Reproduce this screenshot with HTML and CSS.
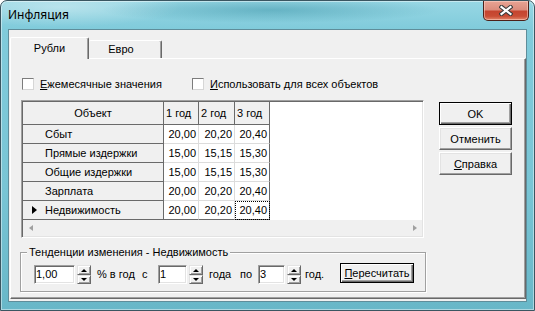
FILE: index.html
```html
<!DOCTYPE html>
<html lang="ru">
<head>
    <meta charset="UTF-8">
    <title>Инфляция</title>
    <link rel="stylesheet" href="styles.css">
</head>
<body>
    <div class="window">
        <div class="titlebar">
            <span class="title">Инфляция</span>
            <button class="close" type="button">
                <svg width="14" height="11" viewBox="0 0 14 11">
                    <path d="M2.5 2 L11.5 9 M11.5 2 L2.5 9" stroke="#3b3b3b" stroke-width="4.2" stroke-linecap="square"/>
                    <path d="M2.5 2 L11.5 9 M11.5 2 L2.5 9" stroke="#fff" stroke-width="2.2" stroke-linecap="square"/>
                </svg>
            </button>
        </div>
        <div class="client">
            <div class="tabs">
                <div class="tab-strip">
                    <div class="tab active">Рубли</div>
                    <div class="tab">Евро</div>
                </div>
                <div class="page">
                    <div class="main">
                        <div class="checks">
                            <label class="check wide"><span class="box"></span><span><u>Е</u>жемесячные значения</span></label>
                            <label class="check"><span class="box"></span><span><u>И</u>спользовать для всех объектов</span></label>
                        </div>
                        <div class="grid">
                            <div class="cells">
                                <div class="sheet">
                                    <div class="fixed head">Объект</div>
                                    <div class="fixed col">1 год</div>
                                    <div class="fixed col">2 год</div>
                                    <div class="fixed col">3 год</div>

                                    <div class="fixed name">Сбыт</div>
                                    <div class="num">20,00</div>
                                    <div class="num">20,20</div>
                                    <div class="num">20,40</div>

                                    <div class="fixed name">Прямые издержки</div>
                                    <div class="num">15,00</div>
                                    <div class="num">15,15</div>
                                    <div class="num">15,30</div>

                                    <div class="fixed name">Общие издержки</div>
                                    <div class="num">15,00</div>
                                    <div class="num">15,15</div>
                                    <div class="num">15,30</div>

                                    <div class="fixed name">Зарплата</div>
                                    <div class="num">20,00</div>
                                    <div class="num">20,20</div>
                                    <div class="num">20,40</div>

                                    <div class="fixed name current"><span class="marker"></span>Недвижимость</div>
                                    <div class="num">20,00</div>
                                    <div class="num">20,20</div>
                                    <div class="num focus">20,40</div>
                                </div>
                            </div>
                            <div class="hscroll"><span class="arr left"></span><span class="arr right"></span></div>
                        </div>
                        <div class="group">
                            <span class="caption">Тенденции изменения - Недвижимость</span>
                            <div class="trend">
                                <span class="edit e1">1,00</span>
                                <span class="spin"><span class="up"></span><span class="down"></span></span>
                                <span class="lbl pct">% в год</span>
                                <span class="lbl from">с</span>
                                <span class="edit e2">1</span>
                                <span class="spin"><span class="up"></span><span class="down"></span></span>
                                <span class="lbl gd">года</span>
                                <span class="lbl to">по</span>
                                <span class="edit e3">3</span>
                                <span class="spin"><span class="up"></span><span class="down"></span></span>
                                <span class="lbl yr">год.</span>
                                <button class="btn default recalc" type="button"><u>П</u>ересчитать</button>
                            </div>
                        </div>
                    </div>
                    <div class="actions">
                        <button class="btn default" type="button">OK</button>
                        <button class="btn" type="button">Отменить</button>
                        <button class="btn" type="button"><u>С</u>правка</button>
                    </div>
                </div>
            </div>
        </div>
    </div>
</body>
</html>
```

FILE: styles.css
```css
* {
    box-sizing: border-box;
}
body {
    margin: 0;
    font-family: "Liberation Sans", Arial, sans-serif;
    font-size: 11px;
    color: #000;
}
.window {
    width: 535px;
    height: 311px;
    display: flex;
    flex-direction: column;
    border: 1px solid #3a5661;
    border-radius: 7px 7px 0 0;
    overflow: hidden;
    background:
        radial-gradient(ellipse 170px 13px at 270px 9px, rgba(50, 140, 160, 0.45), rgba(50, 140, 160, 0)),
        radial-gradient(ellipse 120px 20px at 60px 6px, rgba(255, 255, 255, 0.35), rgba(255, 255, 255, 0)),
        linear-gradient(to bottom, #98d7e4 0, #80cbdb 28px, #79c5d5 60%, #68b7c8 100%);
    box-shadow: inset 0 0 0 1px rgba(255, 255, 255, 0.45);
}
.titlebar {
    height: 28px;
    display: flex;
    align-items: flex-start;
    padding-left: 7px;
}
.title {
    font-family: "Noto Sans", sans-serif;
    font-size: 12px;
    line-height: 28px;
}
.close {
    margin-left: auto;
    margin-right: 5px;
    width: 46px;
    height: 20px;
    padding: 0;
    display: flex;
    align-items: center;
    justify-content: center;
    border: 1px solid #4d2119;
    border-top: none;
    border-radius: 0 0 5px 5px;
    background: linear-gradient(to bottom, #e8a494 0%, #dc8d7d 45%, #c5452f 55%, #c94d35 80%, #e3866a 100%);
    box-shadow: inset 0 0 0 1px rgba(255, 220, 210, 0.5);
}
.client {
    flex: 1;
    margin: 0 7px 8px;
    padding: 7px 0 2px 1px;
    background: #f0f0f0;
    border: 1px solid #5f8d9a;
}
.tabs {
    width: 516px;
    height: 262px;
    display: flex;
    flex-direction: column;
}
.tab-strip {
    height: 21px;
    display: flex;
    align-items: flex-end;
}
.tab {
    width: 73px;
    height: 18px;
    padding-right: 8px;
    line-height: 17px;
    text-align: center;
    background: #f0f0f0;
    border-top: 1px solid #fff;
    border-right: 1px solid #696969;
    border-radius: 2px 2px 0 0;
    box-shadow: inset -1px 0 0 #a0a0a0;
}
.tab.active {
    position: relative;
    z-index: 1;
    width: 79px;
    height: 22px;
    padding-right: 0;
    line-height: 21px;
    margin-bottom: -1px;
    border-left: 1px solid #fff;
}
.page {
    flex: 1;
    display: flex;
    padding-left: 9px;
    border: 1px solid;
    border-color: #fff #696969 #696969 #fff;
    box-shadow: inset -1px -1px 0 #a0a0a0;
}
.main {
    width: 406px;
}
.checks {
    display: flex;
    height: 13px;
    margin: 19px 0 0 2px;
}
.check {
    display: flex;
    align-items: flex-start;
    gap: 6px;
    line-height: 12px;
}
.check.wide {
    width: 170px;
}
.box {
    width: 12px;
    height: 12px;
    background: #fff;
    border: 1px solid;
    border-color: #7c7c7c #d6d6d6 #d6d6d6 #7c7c7c;
}
.grid {
    width: 403px;
    height: 138px;
    margin: 9px 0 0 1px;
    padding: 1px;
    display: flex;
    flex-direction: column;
    background: #fff;
    border: 1px solid;
    border-color: #a0a0a0 #fff #fff #a0a0a0;
    box-shadow: inset 1px 1px 0 #696969, inset -1px -1px 0 #e3e3e3;
}
.cells {
    flex: 1;
    background: #fff;
}
.sheet {
    display: grid;
    grid-template-columns: 141px 35px 36px 35px;
    grid-template-rows: 23px repeat(5, 19px);
    width: 247px;
}
.sheet > div {
    border-right: 1px solid #dcdcdc;
    border-bottom: 1px solid #dcdcdc;
    white-space: nowrap;
}
.sheet > div:nth-child(4n) {
    border-right-color: #6a6a6a;
}
.sheet > div:nth-last-child(-n+4) {
    border-bottom-color: #6a6a6a;
}
.sheet > .fixed {
    background: #f0f0f0;
    border-color: #6a6a6a;
    line-height: 18px;
}
.head {
    line-height: 22px !important;
    text-align: center;
}
.col {
    line-height: 22px !important;
    padding-left: 2px;
}
.name {
    display: flex;
    align-items: center;
    padding-left: 22px;
}
.name.current {
    padding-left: 9px;
}
.marker {
    width: 0;
    height: 0;
    margin-right: 8px;
    border-top: 4px solid transparent;
    border-bottom: 4px solid transparent;
    border-left: 5px solid #000;
}
.num {
    background: #fff;
    text-align: right;
    padding-right: 2px;
    line-height: 18px;
}
.focus {
    outline: 1px dotted #000;
    outline-offset: -1px;
}
.hscroll {
    height: 16px;
    display: flex;
    align-items: center;
    justify-content: space-between;
    padding: 0 5px 0 6px;
    background: #f0f0f0;
}
.arr {
    width: 0;
    height: 0;
    border-top: 3px solid transparent;
    border-bottom: 3px solid transparent;
}
.arr.left {
    border-right: 4px solid #a0a0a0;
}
.arr.right {
    border-left: 4px solid #a0a0a0;
}
.group {
    width: 406px;
    height: 40px;
    margin-top: 14px;
    border: 1px solid #a0a0a0;
    box-shadow: inset 1px 1px 0 #fff, 1px 1px 0 #fff;
}
.caption {
    display: table;
    margin: -7px 0 0 6px;
    padding: 0 2px;
    line-height: 13px;
    background: #f0f0f0;
}
.trend {
    display: flex;
    align-items: flex-start;
    height: 21px;
    margin-top: 4px;
    padding-left: 13px;
}
.edit {
    height: 19px;
    margin-top: 2px;
    padding-left: 1px;
    line-height: 17px;
    background: #fff;
    border: 1px solid;
    border-color: #a0a0a0 #fff #fff #a0a0a0;
    box-shadow: inset 1px 1px 0 #696969, inset -1px -1px 0 #e3e3e3;
}
.e1 {
    width: 41px;
}
.e2 {
    width: 29px;
}
.e3 {
    width: 27px;
}
.spin {
    width: 14px;
    height: 19px;
    margin: 2px 0 0 2px;
    display: flex;
    flex-direction: column;
}
.spin > span {
    display: flex;
    align-items: center;
    justify-content: center;
    background: #f0f0f0;
    border: 1px solid;
    border-color: #e3e3e3 #696969 #696969 #e3e3e3;
    box-shadow: inset 1px 1px 0 #fff, inset -1px -1px 0 #a0a0a0;
}
.spin .up {
    height: 10px;
}
.spin .down {
    height: 9px;
}
.spin .up::after,
.spin .down::after {
    content: "";
    width: 0;
    height: 0;
    border-left: 3px solid transparent;
    border-right: 3px solid transparent;
}
.spin .up::after {
    border-bottom: 3px solid #000;
}
.spin .down::after {
    border-top: 3px solid #000;
}
.lbl {
    line-height: 19px;
    margin-top: 2px;
}
.pct {
    width: 45px;
    margin-left: 6px;
}
.from {
    width: 16px;
}
.gd {
    width: 31px;
    margin-left: 6px;
}
.to {
    width: 18px;
}
.yr {
    width: 35px;
    margin-left: 4px;
}
.actions {
    display: flex;
    flex-direction: column;
    gap: 2px;
    margin: 43px 0 0 13px;
}
.btn {
    display: block;
    width: 73px;
    height: 23px;
    padding: 0;
    font: inherit;
    color: #000;
    background: #f0f0f0;
    border: 1px solid;
    border-color: #fff #696969 #696969 #fff;
    box-shadow: inset -1px -1px 0 #a0a0a0, inset 1px 1px 0 #e3e3e3;
}
.btn.default {
    border-color: #000;
    box-shadow: inset 1px 1px 0 #fff, inset -1px -1px 0 #696969, inset -2px -2px 0 #a0a0a0;
}
.recalc {
    width: 74px;
    height: 20px;
}
```
